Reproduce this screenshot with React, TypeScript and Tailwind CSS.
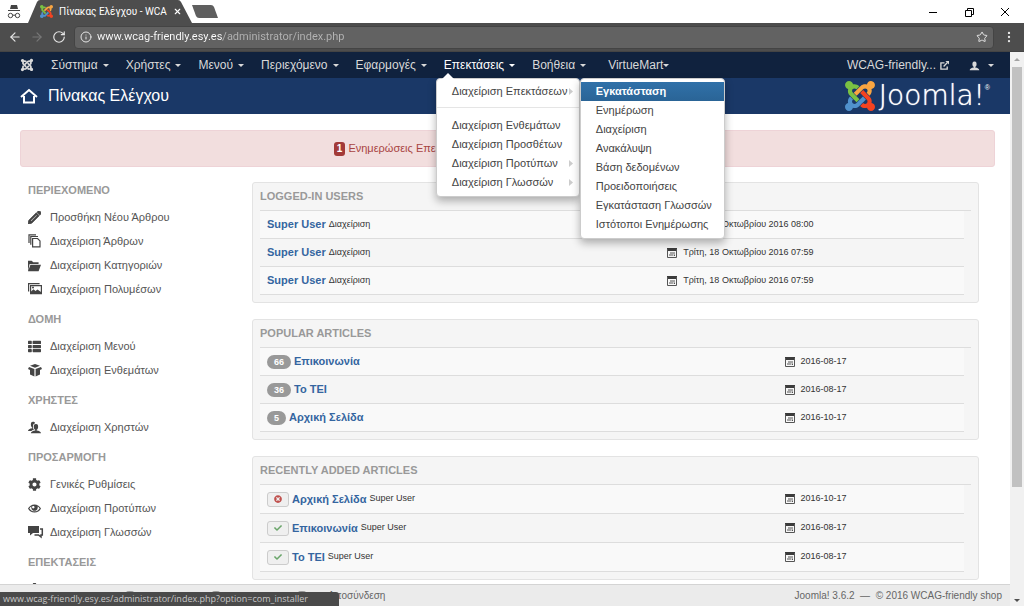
import { ReactNode, useState } from 'react';
import clsx from 'clsx';
import { FaCog, FaDownload, FaThList, FaCheck, FaTimesCircle, FaJoomla } from 'react-icons/fa';
import { ImEye, ImFolderOpen, ImPencil, ImUser, ImUsers } from 'react-icons/im';
import { ArrowLeft, ArrowRight, Info, MoreVertical, RotateCw, Star, X } from 'lucide-react';

type MenuItem = {
  label: string;
  arrow?: boolean;
};

type SideGroup = {
  title: string;
  items: { label: string; icon: ReactNode }[];
};

const Caret = ({ className }: { className?: string }) => (
  <svg viewBox="0 0 6 3" className={clsx('w-[6px] h-[3px] fill-current', className)}>
    <path d="M0 0h6L3 3z" />
  </svg>
);

const JoomlaMark = ({ className }: { className?: string }) => (
  <svg viewBox="0 32 448 448" className={className}>
    <path
      fill="#7ac143"
      d="M.6 92.1C.6 58.8 27.4 32 60.4 32c30 0 54.5 21.9 59.2 50.2 32.6-7.6 67.1.6 96.5 30l-44.3 44.3c-20.5-20.5-42.6-16.3-55.4-3.5-14.3 14.3-14.3 37.9 0 52.2l99.5 99.5-44 44.3c-87.7-87.2-49.7-49.7-99.8-99.7-26.8-26.5-35-64.8-24.8-98.9C20.4 144.6.6 120.7.6 92.1z"
    />
    <path
      fill="#f9a541"
      d="M130.1 208.5l44.3 44.3c10-10 89.7-89.7 99.7-99.8 14.3-14.3 37.6-14.3 51.9 0 12.8 12.8 17 35-3.5 55.4l44 44.3c31.2-31.2 38.5-67.6 28.9-101.2 29.2-4.1 51.9-29.2 51.9-59.5 0-33.2-26.8-60.1-59.8-60.1-30.3 0-55.4 22.5-59.5 51.6-33.8-9.9-71.7-1.5-98.3 25.1-18.3 19.1-71.1 71.5-99.6 99.9z"
    />
    <path
      fill="#f44321"
      d="M396.4 360.7c8.2-32.7-.9-68.5-26.3-93.9-11.8-12.2 5 4.7-99.5-99.7l-44.3 44.3 99.7 99.7c14.3 14.3 14.3 37.6 0 51.9-12.8 12.8-35 17-55.4-3.5l-44 44.3c27.6 30.2 68 38.8 102.7 28 5.5 27.4 29.7 48.1 58.9 48.1 33 0 59.8-26.8 59.8-60.1 0-30.2-22.5-55-51.6-59.1z"
    />
    <path
      fill="#5091cd"
      d="M312.1 307.6l-44-44.3c-87 86.4-50.4 50.4-99.7 99.8-14.3 14.3-37.6 14.3-51.9 0-13.1-13.4-16.9-35.3 3.2-55.4l-44-44.3c-30.2 30.2-38 65.2-29.5 98.3-26.7 6-46.2 29.9-46.2 58.2C0 453.2 26.8 480 59.8 480c28.6 0 52.5-19.8 58.6-46.7 32.7 8.2 68.5-.6 94.2-26 32.1-32 12.2-12.4 99.5-99.7z"
    />
  </svg>
);

const HomeIcon = () => (
  <svg viewBox="0 0 18 16" className="w-[18px] h-4" fill="none" stroke="white" strokeWidth="2">
    <path d="M1 9l8-7 8 7" />
    <path d="M4 8v6.500h10V8" />
  </svg>
);

const CopyIcon = () => (
  <svg viewBox="0 0 14 14" className="w-[14px] h-[14px]" fill="none" stroke="currentColor">
    <path d="M1 9V.8h7M2.800 10.800V2.500H10" strokeWidth="1.200" />
    <path d="M4.600 4.500h5l2.400 2.400v6H4.600z" strokeWidth="1.200" />
  </svg>
);

const ImagesIcon = () => (
  <svg viewBox="0 0 14 14" className="w-[14px] h-[14px]" fill="none" stroke="currentColor">
    <path d="M.6 9.500V1.600h11" strokeWidth="1.200" />
    <path d="M2.600 3.600h10.800v8H2.600z" strokeWidth="1.200" />
    <path d="M3 11.500v-2l2.500-2.300 2 1.800 2-1.600 3.500 2.600v1.500z" fill="currentColor" stroke="none" />
    <circle cx="5" cy="5.500" r="1" fill="currentColor" stroke="none" />
  </svg>
);

const BoxIcon = () => (
  <svg viewBox="0 0 14 14" className="w-[14px] h-[14px] fill-current">
    <path d="M7 1l5 1.800L7 4.700 2 2.800zM1 4l5.400 2v7.500L2 11.500V7L0 6zM13 4L7.600 6v7.500l4.400-2V7l2-1z" />
  </svg>
);

const CommentsIcon = () => (
  <svg viewBox="0 0 16 14" className="w-4 h-[14px]">
    <path className="fill-current" d="M0 1h11v7H5L2 10.500V8H0z" />
    <path fill="none" stroke="currentColor" strokeWidth="1.500" d="M12 4h2.300v6H13v2l-2.500-2H6.500" />
  </svg>
);

const CalendarIcon = () => (
  <svg viewBox="0 0 10 10" className="w-[10px] h-[10px] shrink-0">
    <path fill="#3c3c3c" d="M0 0h10v3H0z" />
    <path fill="none" stroke="#555" d="M.5 1v8.500h9V1M3 5h5M2 7h4.500M7.500 6.500V8" />
  </svg>
);

const ExternalIcon = () => (
  <svg viewBox="0 0 10 10" className="w-[9px] h-[9px]" fill="none" stroke="currentColor" strokeWidth="1.500">
    <path d="M5 2H1v7h7V6M4 6l4-4" />
    <path d="M6 0h4v4z" fill="currentColor" stroke="none" />
  </svg>
);

const IncognitoIcon = () => (
  <svg viewBox="0 0 14 14" className="w-[14px] h-[14px]" fill="none" stroke="#444">
    <path d="M4 0h6l1 4H3z" fill="#444" stroke="none" />
    <path d="M1 5.500h12M5.500 10.500q1.500-1 3 0" />
    <circle cx="3.500" cy="10.500" r="2.200" />
    <circle cx="10.500" cy="10.500" r="2.200" />
  </svg>
);

const navItems = ['Σύστημα', 'Χρήστες', 'Μενού', 'Περιεχόμενο', 'Εφαρμογές', 'Επεκτάσεις', 'Βοήθεια'];

const extensionsMenu: MenuItem[] = [
  { label: 'Διαχείριση Ενθεμάτων' },
  { label: 'Διαχείριση Προσθέτων' },
  { label: 'Διαχείριση Προτύπων', arrow: true },
  { label: 'Διαχείριση Γλωσσών', arrow: true },
];

const installerMenu = [
  'Εγκατάσταση',
  'Ενημέρωση',
  'Διαχείριση',
  'Ανακάλυψη',
  'Βάση δεδομένων',
  'Προειδοποιήσεις',
  'Εγκατάσταση Γλωσσών',
  'Ιστότοποι Ενημέρωσης',
];

const sideGroups: SideGroup[] = [
  {
    title: 'ΠΕΡΙΕΧΟΜΕΝΟ',
    items: [
      { label: 'Προσθήκη Νέου Άρθρου', icon: <ImPencil strokeWidth={1} stroke="currentColor" /> },
      { label: 'Διαχείριση Άρθρων', icon: <CopyIcon /> },
      { label: 'Διαχείριση Κατηγοριών', icon: <ImFolderOpen /> },
      { label: 'Διαχείριση Πολυμέσων', icon: <ImagesIcon /> },
    ],
  },
  {
    title: 'ΔΟΜΗ',
    items: [
      { label: 'Διαχείριση Μενού', icon: <FaThList /> },
      { label: 'Διαχείριση Ενθεμάτων', icon: <BoxIcon /> },
    ],
  },
  { title: 'ΧΡΗΣΤΕΣ', items: [{ label: 'Διαχείριση Χρηστών', icon: <ImUsers /> }] },
  {
    title: 'ΠΡΟΣΑΡΜΟΓΗ',
    items: [
      { label: 'Γενικές Ρυθμίσεις', icon: <FaCog /> },
      { label: 'Διαχείριση Προτύπων', icon: <ImEye /> },
      { label: 'Διαχείριση Γλωσσών', icon: <CommentsIcon /> },
    ],
  },
  { title: 'ΕΠΕΚΤΑΣΕΙΣ', items: [{ label: '', icon: <FaDownload size={13} /> }] },
];

const loggedIn = ['Τρίτη, 18 Οκτωβρίου 2016 08:00', 'Τρίτη, 18 Οκτωβρίου 2016 07:59', 'Τρίτη, 18 Οκτωβρίου 2016 07:59'];

const popular = [
  { hits: 66, title: 'Επικοινωνία', date: '2016-08-17' },
  { hits: 36, title: 'Το ΤΕΙ', date: '2016-08-17' },
  { hits: 5, title: 'Αρχική Σελίδα', date: '2016-10-17' },
];

const recent = [
  { published: false, title: 'Αρχική Σελίδα', date: '2016-10-17' },
  { published: true, title: 'Επικοινωνία', date: '2016-08-17' },
  { published: true, title: 'Το ΤΕΙ', date: '2016-08-17' },
];

const BrowserChrome = () => {
  const [url, setUrl] = useState('www.wcag-friendly.esy.es/administrator/index.php');

  return (
    <header className="shrink-0 font-[Roboto,sans-serif]">
      <div className="flex items-stretch h-[23px] bg-white">
        <div className="flex items-center justify-center w-7">
          <IncognitoIcon />
        </div>
        <div className="relative flex items-center w-[164px] pl-3 pr-[18px] gap-[6px] text-white">
          <svg viewBox="0 0 164 23" preserveAspectRatio="none" className="absolute inset-0 w-full h-full">
            <path d="M0 23L9 2q1-2 3-2h138q2 0 3 2l11 21z" fill="#4d4d4d" />
          </svg>
          <JoomlaMark className="relative w-[13px] h-[13px] shrink-0" />
          <span className="relative flex-1 text-[10px] leading-4 whitespace-nowrap">Πίνακας Ελέγχου - WCA</span>
          <button aria-label="Close tab" className="relative">
            <X size={9} strokeWidth={3} />
          </button>
        </div>
        <button aria-label="New tab" className="self-center">
          <svg viewBox="0 0 26 13" className="w-[26px] h-[13px]">
            <path d="M0 0h19q2 0 3 2l4 11H7q-2 0-3-2z" fill="#5f5f5f" />
          </svg>
        </button>
        <div className="flex items-center gap-[26px] pr-[14px] ml-auto text-black">
          <button aria-label="Minimize">
            <svg viewBox="0 0 10 10" className="w-[10px] h-[10px]" stroke="currentColor">
              <path d="M1 5.500h8" />
            </svg>
          </button>
          <button aria-label="Restore">
            <svg viewBox="0 0 10 10" className="w-[10px] h-[10px]" fill="none" stroke="currentColor">
              <path d="M1.500 3.500h6v6h-6zM3.500 3V1.500h6v6H8" />
            </svg>
          </button>
          <button aria-label="Close">
            <svg viewBox="0 0 10 10" className="w-[10px] h-[10px]" stroke="currentColor">
              <path d="M1 1l8 8M9 1L1 9" />
            </svg>
          </button>
        </div>
      </div>
      <div className="flex items-center h-[29px] px-2 bg-[#4d4d4d] border-b border-[#444] text-[#e6e6e6]">
        <button aria-label="Back">
          <ArrowLeft size={14} />
        </button>
        <button aria-label="Forward" className="ml-2 text-[#777]">
          <ArrowRight size={14} />
        </button>
        <button aria-label="Reload" className="ml-2">
          <RotateCw size={14} />
        </button>
        <div className="flex items-center flex-1 h-[23px] px-[5px] ml-2 mr-2 bg-[#626262] border border-[#444] rounded-sm">
          <Info size={12} />
          <input
            aria-label="Address"
            value={url}
            onChange={(e) => setUrl(e.target.value)}
            className="flex-1 ml-[5px] text-[11px] leading-4 text-transparent bg-[linear-gradient(90deg,#fff_126px,#b4b4b4_126px)] bg-clip-text outline-none"
          />
          <button aria-label="Bookmark">
            <Star size={12} />
          </button>
        </div>
        <button aria-label="Browser menu">
          <MoreVertical size={14} />
        </button>
      </div>
    </header>
  );
};

const menuBox = 'absolute z-20 pt-[3px] pb-1 bg-white border border-[#ccc] rounded-[4px] shadow-[0_4px_8px_rgba(0,0,0,0.3)]';
const menuLink = 'flex items-center justify-between h-[19px] pl-[15px] pr-[6px] text-[11px] whitespace-nowrap';

const SubArrow = () => (
  <svg viewBox="0 0 4 7" className="w-1 h-[7px] fill-[#ccc]">
    <path d="M0 0l4 3.500L0 7z" />
  </svg>
);

const ExtensionsMenu = () => (
  <>
    <div className={clsx(menuBox, 'top-full left-[-8px] w-[144px] text-[#444]')}>
      <svg viewBox="0 0 12 6" className="absolute -top-[6px] left-[5px] w-3 h-[6px] fill-white">
        <path d="M0 6l6-6 6 6z" />
      </svg>
      <a href="#" className={menuLink}>
        Διαχείριση Επεκτάσεων <SubArrow />
      </a>
      <div className="mt-[6px] mb-2 border-b border-[#e5e5e5]" />
      {extensionsMenu.map((item) => (
        <a key={item.label} href="#" className={menuLink}>
          {item.label} {item.arrow && <SubArrow />}
        </a>
      ))}
    </div>
    <div className={clsx(menuBox, 'top-full left-[136px] w-[145px] text-[#444]')}>
      {installerMenu.map((label, i) => (
        <a
          key={label}
          href="#"
          className={clsx(menuLink, i === 0 && 'bg-linear-to-b from-[#3071a9] to-[#2a6496] font-bold text-white')}
        >
          {label}
        </a>
      ))}
    </div>
  </>
);

const Navbar = () => {
  const [open, setOpen] = useState('Επεκτάσεις');

  return (
    <nav className="relative flex items-center h-[26px] pl-5 pr-4 bg-[#10223e] text-[#d9d9d9] text-xs">
      <a href="#" aria-label="Joomla">
        <FaJoomla size={14} />
      </a>
      <div className="flex items-center gap-[17px] ml-[17px]">
        {navItems.map((label) => (
          <div key={label} className="relative flex items-center h-[26px]">
            <button
              onClick={() => setOpen(open === label ? '' : label)}
              className={clsx('flex items-center gap-[5px]', open === label && 'text-white')}
            >
              {label}
              <Caret />
            </button>
            {label === 'Επεκτάσεις' && open === label && <ExtensionsMenu />}
          </div>
        ))}
        <button className="flex items-center ml-[5px]">
          VirtueMart
          <Caret />
        </button>
      </div>
      <div className="flex items-center gap-5 ml-auto">
        <a href="#" className="flex items-center gap-1">
          WCAG-friendly... <ExternalIcon />
        </a>
        <button aria-label="User menu" className="flex items-center gap-2">
          <ImUser size={11} />
          <Caret />
        </button>
      </div>
    </nav>
  );
};

const Sidebar = () => (
  <aside className="w-[232px] pl-2 shrink-0">
    {sideGroups.map((group) => (
      <section key={group.title} className="mb-[10px]">
        <h2 className="mb-[7px] text-[11px] leading-4 font-bold text-[#999]">{group.title}</h2>
        <ul>
          {group.items.map((item) => (
            <li key={item.label}>
              <a href="#" className="flex items-center h-6 text-[11px] text-[#555]">
                <span className="w-[22px] text-[13px] text-[#444]">{item.icon}</span>
                {item.label}
              </a>
            </li>
          ))}
        </ul>
      </section>
    ))}
  </aside>
);

const Panel = ({ title, children }: { title: string; children: ReactNode }) => (
  <section className="px-[7px] pb-[7px] mb-4 bg-[#f5f5f5] border border-[#e3e3e3] rounded-[3px]">
    <h2 className="h-7 pt-1 text-[11px] leading-[18px] font-bold text-[#999] border-b border-[#ddd]">{title}</h2>
    <ul className="mr-[7px]">{children}</ul>
  </section>
);

const Row = ({ date, wide, tall, children }: { date: string; wide?: boolean; tall?: boolean; children: ReactNode }) => (
  <li
    className={clsx(
      'flex items-center px-[7px] text-[9px] text-[#333] border-b border-[#ddd] odd:bg-[#f9f9f9]',
      tall ? 'h-[29px]' : 'h-7',
    )}
  >
    <div className={clsx('flex items-center gap-[3px]', wide ? 'w-3/4' : 'w-[58%]')}>{children}</div>
    <div className="flex items-center gap-[6px]">
      <CalendarIcon />
      {date}
    </div>
  </li>
);

const TitleLink = ({ children }: { children: ReactNode }) => (
  <a href="#" className="text-[11px] font-bold text-[#3465a0]">
    {children}
  </a>
);

const Dashboard = () => (
  <main className="flex-1 min-h-0 px-5 pt-4 overflow-hidden bg-white">
    <div className="flex items-center justify-center gap-[3px] h-[37px] pl-2 mr-[-5px] text-[11px] text-[#a94442] bg-[#f2dede] border border-[#eed3d7] rounded-[3px]">
      <span className="px-[3px] text-[10px] leading-[14px] font-bold text-white bg-[#a33a38] rounded-[3px]">1</span>
      <span>Ενημερώσεις Επεκτάσεων είναι διαθέσιμες:</span>
      <button className="px-1 leading-5 text-white bg-[#1f496e] rounded-[3px]">Προβολή Ενημερώσεων</button>
    </div>
    <div className="flex pt-[15px]">
      <Sidebar />
      <div className="flex-1 mr-[11px]">
        <Panel title="LOGGED-IN USERS">
          {loggedIn.map((date, i) => (
            <Row key={i} date={date}>
              <TitleLink>Super User</TitleLink> Διαχείριση
            </Row>
          ))}
        </Panel>
        <Panel title="POPULAR ARTICLES">
          {popular.map((row) => (
            <Row key={row.title} date={row.date} wide>
              <span className="px-[7px] leading-[14px] font-bold text-white bg-[#999] rounded-full">{row.hits}</span>
              <TitleLink>{row.title}</TitleLink>
            </Row>
          ))}
        </Panel>
        <Panel title="RECENTLY ADDED ARTICLES">
          {recent.map((row) => (
            <Row key={row.title} date={row.date} wide tall>
              <button
                aria-label={row.published ? 'Unpublish' : 'Publish'}
                className="flex items-center justify-center w-[22px] h-[15px] bg-[#efefef] border border-[#ccc] rounded-[3px]"
              >
                {row.published ? (
                  <FaCheck size={8} className="text-[#6aa56a]" />
                ) : (
                  <FaTimesCircle size={8} className="text-[#c0504d]" />
                )}
              </button>
              <TitleLink>{row.title}</TitleLink> Super User
            </Row>
          ))}
        </Panel>
      </div>
    </div>
  </main>
);

export default function App() {
  return (
    <div className="relative flex flex-col h-screen overflow-hidden font-['Liberation_Sans',Arial,sans-serif]">
      <BrowserChrome />
      <div className="flex flex-1 min-h-0">
        <div className="flex flex-col flex-1 min-w-0">
          <Navbar />
          <div className="flex items-center h-9 px-5 bg-[#1a3867] text-white shrink-0">
            <HomeIcon />
            <h1 className="ml-[10px] text-base">Πίνακας Ελέγχου</h1>
            <div className="flex items-center gap-1 ml-auto">
              <JoomlaMark className="w-[30px] h-[30px]" />
              <span className="flex items-start">
                <span className="text-[28px] leading-[30px] font-extralight font-['DejaVu_Sans',sans-serif] [text-shadow:0_0_1px_#fff]">
                  Joomla!
                </span>
                <span className="text-[7px] leading-[14px]">®</span>
              </span>
            </div>
          </div>
          <Dashboard />
          <footer className="flex items-center h-[22px] pl-[124px] pr-2 text-[10px] text-[#666] bg-[#ebebeb] border-t border-[#d4d4d4] shrink-0">
            {/* visitor, admin and message counters */}
            <div className="flex gap-[74px]">
              <span className="w-3 h-[10px] bg-[#999] rounded-full" />
              <span className="w-3 h-[10px] bg-[#999] rounded-full" />
              <span className="w-3 h-[10px] bg-[#999] rounded-full" />
            </div>
            <a href="#" className="ml-5">
              Αποσύνδεση
            </a>
            <span className="ml-auto">Joomla! 3.6.2 &nbsp;—&nbsp; © 2016 WCAG-friendly shop</span>
          </footer>
        </div>
        {/* scrollbar */}
        <div className="flex flex-col items-center w-[14px] pt-[6px] pb-1 bg-[#f1f1f1] text-[#505050]">
          <Caret className="rotate-180 text-[#a3a3a3]" />
          <div className="w-[10px] h-[420px] mt-[6px] bg-[#c1c1c1]" />
          <Caret className="mt-auto" />
        </div>
      </div>
      <div className="absolute bottom-0 left-0 z-30 w-[339px] pl-[3px] text-[9px] leading-[14px] whitespace-nowrap text-[#c8c8c8] bg-[#4a4a4a] rounded-tr-[3px] font-['Open_Sans',sans-serif]">
        www.wcag-friendly.esy.es/administrator/index.php?option=com_installer
      </div>
    </div>
  );
}
